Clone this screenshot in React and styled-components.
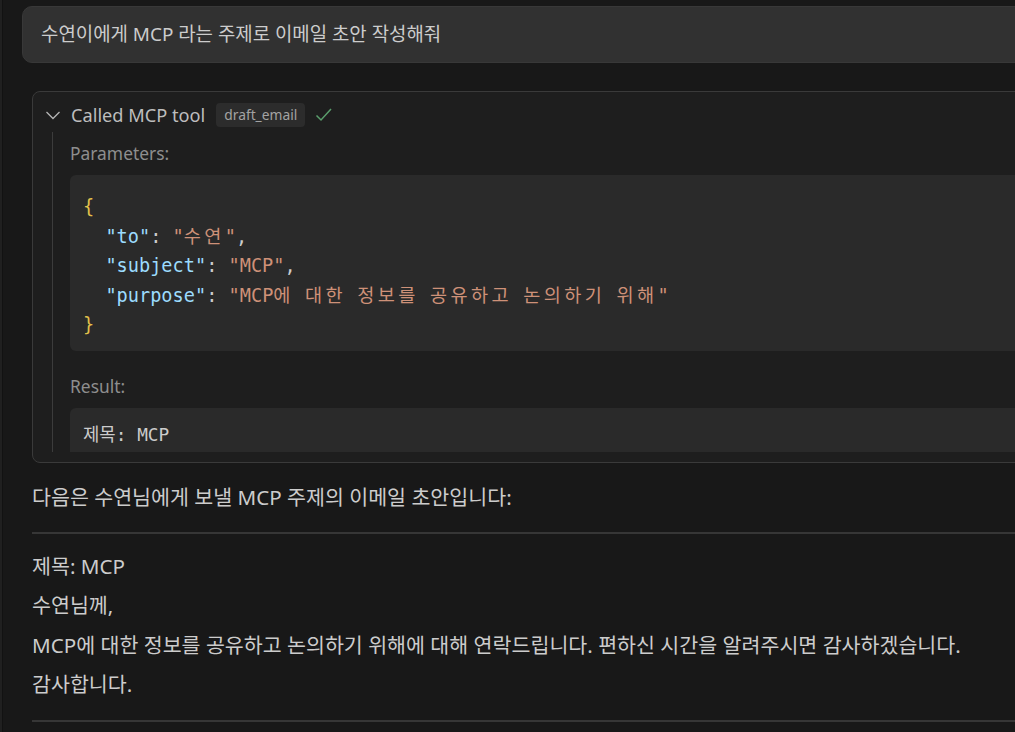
import styled, { createGlobalStyle } from "styled-components";

const GlobalStyle = createGlobalStyle`
  html, body {
    margin: 0;
    padding: 0;
    background: #181818;
    overflow: hidden;
  }
  body {
    font-family: "Noto Sans", "Noto Sans CJK KR", sans-serif;
    color: #cccccc;
  }
`;

const Page = styled.div`
  height: 732px;
  border-left: 2px solid #202020;
  box-shadow: inset 1px 0 #121212;
  padding: 6px 0 0 20px;
  box-sizing: border-box;
`;

const Column = styled.div`
  width: 1060px;
  display: flex;
  flex-direction: column;
`;

const Bubble = styled.div`
  background: #313131;
  border: 1px solid #383838;
  border-radius: 10px;
  padding: 15px 18px;
  font-size: 18.9px;
  line-height: 25px;
  color: #cccccc;
`;

const ToolBox = styled.div`
  margin: 28px 0 0 10px;
  background: #1e1e1e;
  border: 1px solid #3a3a3a;
  border-radius: 8px;
  padding: 11px 0 10px 12px;
`;

const Header = styled.div`
  display: flex;
  align-items: center;
  height: 24px;
  gap: 10px;
  font-size: 18.2px;
  color: #bdbdbd;
`;

const Title = styled.span`
  margin-right: 1px;
`;

const Badge = styled.span`
  background: #2c2c2c;
  border-radius: 4px;
  padding: 0 8px;
  height: 24px;
  line-height: 24px;
  font-size: 13.8px;
  color: #a3a3a3;
`;

const Body = styled.div`
  margin: 5px 0 0 7px;
  border-left: 1px solid #3c3c3c;
  padding: 9px 0 0 17px;
  max-height: 311px;
  overflow: hidden;
`;

const Label = styled.div`
  font-size: 17.4px;
  line-height: 24px;
  color: #8e8e8e;
  margin-top: ${(p) => (p.$spaced ? "23px" : "0")};
`;

const Code = styled.pre`
  margin: 10px 0 0;
  background: #2a2a2a;
  border-radius: 6px;
  padding: ${(p) => (p.$result ? "12px 13px 14px" : "17px 13px 11px")};
  font-family: "DejaVu Sans Mono", "Noto Sans CJK KR", monospace;
  font-size: ${(p) => (p.$result ? "17.8px" : "18.6px")};
  line-height: 29.5px;
  color: #cccccc;
  white-space: pre;
`;

const Brace = styled.span`
  color: #e2c04a;
`;

const Key = styled.span`
  color: #9cdcfe;
`;

const Str = styled.span`
  color: #ce9178;
`;

const Wide = styled.span`
  letter-spacing: 3.4px;
`;

const Reply = styled.div`
  margin: 18px 0 0 10px;
  font-size: 20.6px;
`;

const Intro = styled.p`
  margin: 0;
  line-height: 32px;
`;

const Rule = styled.hr`
  border: none;
  border-top: 2px solid #363636;
  margin: ${(p) => (p.$last ? "15px 0 0" : "19px 0 0")};
`;

const Email = styled.div`
  padding: 13px 0 0;
  line-height: 39.4px;
`;

const Line = styled.div``;

const Chevron = () => (
  <svg width="16" height="16" viewBox="0 0 16 16" fill="none">
    <path d="M1.5 5 L8 11.5 L14.5 5" stroke="#b5b5b5" strokeWidth="1.3" />
  </svg>
);

const Check = () => (
  <svg width="18" height="16" viewBox="0 0 18 16" fill="none">
    <path d="M1.5 8.5 L6 13 L16 2" stroke="#5a9e6c" strokeWidth="1.5" />
  </svg>
);

const App = () => {
  return (
    <Page>
      <GlobalStyle />
      <Column>
        <Bubble>수연이에게 MCP 라는 주제로 이메일 초안 작성해줘</Bubble>

        <ToolBox>
          <Header>
            <Chevron />
            <Title>Called MCP tool</Title>
            <Badge>draft_email</Badge>
            <Check />
          </Header>
          <Body>
            <Label>Parameters:</Label>
            <Code>
              <Brace>{"{"}</Brace>
              {"\n  "}
              <Key>"to"</Key>: <Str>"<Wide>수연</Wide>"</Str>,{"\n  "}
              <Key>"subject"</Key>: <Str>"MCP"</Str>,{"\n  "}
              <Key>"purpose"</Key>:{" "}
              <Str>
                "MCP<Wide>에</Wide> <Wide>대한</Wide> <Wide>정보를</Wide>{" "}
                <Wide>공유하고</Wide> <Wide>논의하기</Wide> <Wide>위해</Wide>"
              </Str>
              {"\n"}
              <Brace>{"}"}</Brace>
            </Code>
            <Label $spaced>Result:</Label>
            <Code $result>{"제목: MCP\n\n수연님께,\n\nMCP에 대한 정보를 공유하고 논의하기 위해에 대해 연락드립니다."}</Code>
          </Body>
        </ToolBox>

        <Reply>
          <Intro>다음은 수연님에게 보낼 MCP 주제의 이메일 초안입니다:</Intro>
          <Rule />
          <Email>
            <Line>제목: MCP</Line>
            <Line>수연님께,</Line>
            <Line>MCP에 대한 정보를 공유하고 논의하기 위해에 대해 연락드립니다. 편하신 시간을 알려주시면 감사하겠습니다.</Line>
            <Line>감사합니다.</Line>
          </Email>
          <Rule $last />
        </Reply>
      </Column>
    </Page>
  );
};

export default App;
